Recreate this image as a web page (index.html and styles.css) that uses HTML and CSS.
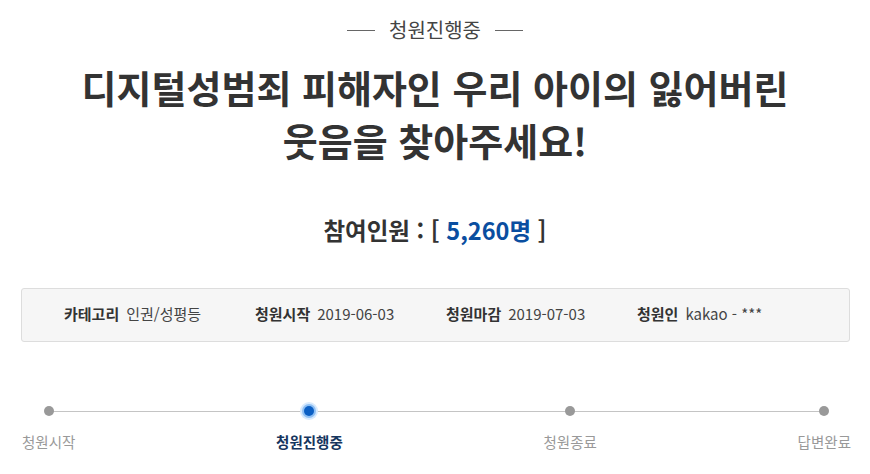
FILE: index.html
```html
<!DOCTYPE html>
<html lang="ko">
<head>
    <meta charset="UTF-8">
    <meta name="viewport" content="width=device-width, initial-scale=1.0">
    <title>청원진행중</title>
    <link rel="stylesheet" href="styles.css">
</head>
<body>
    <div class="petition">
        <div class="status"><span>청원진행중</span></div>
        <h1 class="title">디지털성범죄 피해자인 우리 아이의 잃어버린<br>웃음을 찾아주세요!</h1>
        <p class="count">참여인원 : [ <span class="num">5,260명</span> ]</p>

        <ul class="info">
            <li><strong>카테고리</strong>인권/성평등</li>
            <li><strong>청원시작</strong>2019-06-03</li>
            <li><strong>청원마감</strong>2019-07-03</li>
            <li><strong>청원인</strong>kakao - ***</li>
        </ul>

        <div class="steps">
            <div class="line"></div>
            <div class="step">
                <span class="dot"></span>
                <span class="label">청원시작</span>
            </div>
            <div class="step active">
                <span class="dot"></span>
                <span class="label">청원진행중</span>
            </div>
            <div class="step">
                <span class="dot"></span>
                <span class="label">청원종료</span>
            </div>
            <div class="step">
                <span class="dot"></span>
                <span class="label">답변완료</span>
            </div>
        </div>
    </div>
</body>
</html>
```

FILE: styles.css
```css
body {
    margin: 0;
    padding: 0;
    background: #fff;
    color: #333;
    font-family: "Noto Sans CJK KR", "Noto Sans", sans-serif;
}
.petition {
    padding-top: 16px;
}
.status {
    display: flex;
    justify-content: center;
    align-items: center;
    gap: 14px;
    font-size: 20px;
    line-height: 28px;
    color: #444;
}
.status::before, .status::after {
    content: "";
    width: 28px;
    height: 1px;
    background: #666;
}
.title {
    margin: 16px 0 0;
    text-align: center;
    font-size: 38px;
    line-height: 53px;
    font-weight: 700;
    color: #333;
}
.count {
    margin: 49px 0 0;
    text-align: center;
    font-size: 23.5px;
    line-height: 30px;
    font-weight: 700;
}
.count .num {
    color: #0a4ea0;
}
.info {
    display: flex;
    list-style: none;
    margin: 43px 20px 0 21px;
    padding: 15px 0 17px 42px;
    background: #f6f6f6;
    border: 1px solid #ddd;
    border-radius: 3px;
    font-size: 15px;
    line-height: 20px;
    color: #444;
}
.info li {
    width: 191px;
}
.info strong {
    margin-right: 7px;
    color: #333;
}
.steps {
    position: relative;
    display: flex;
    justify-content: space-between;
    margin-top: 64px;
    padding: 0 19px 0 22px;
}
.steps .line {
    position: absolute;
    top: 5px;
    left: 48px;
    right: 47px;
    height: 1px;
    background: #c4c4c4;
}
.step {
    position: relative;
    display: flex;
    flex-direction: column;
    align-items: center;
}
.dot {
    width: 10px;
    height: 10px;
    border-radius: 50%;
    background: #999;
}
.label {
    margin-top: 16px;
    font-size: 14.5px;
    line-height: 20px;
    color: #999;
}
.step.active .dot {
    background: #0b5fc4;
    box-shadow: 0 0 0 2px #8fc0f4, 0 0 0 4px #d8eafd;
}
.step.active .label {
    color: #16355e;
    font-weight: 700;
}
```
